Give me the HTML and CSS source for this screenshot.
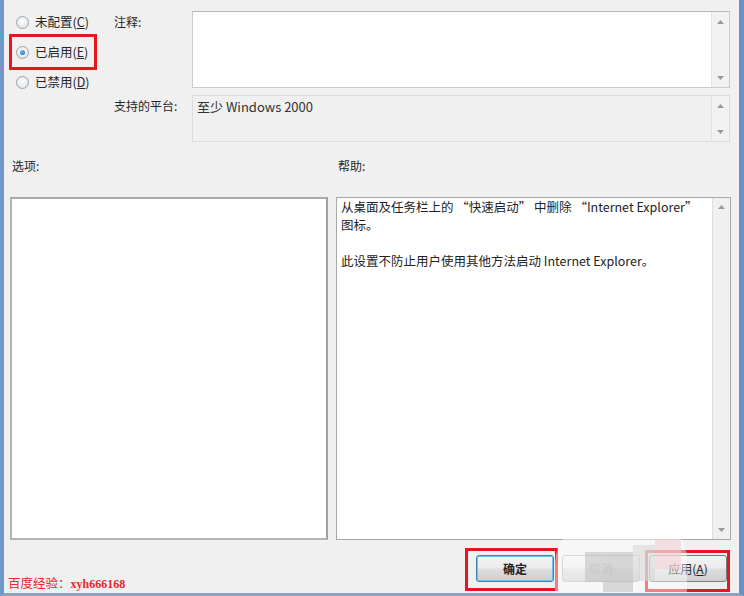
FILE: index.html
```html
<!DOCTYPE html>
<html lang="zh-CN">

<head>
  <meta charset="UTF-8" />
  <meta name="viewport" content="width=device-width, initial-scale=1.0" />
  <title>删除“快速启动”中的 Internet Explorer 图标</title>
  <link rel="stylesheet" href="styles.css">
</head>

<body>
  <div class="window">
    <div class="top">
      <div class="states">
        <div class="state"><span class="radio"></span><span class="state-text">未配置(<u>C</u>)</span></div>
        <div class="state marked"><span class="radio checked"></span><span class="state-text">已启用(<u>E</u>)</span></div>
        <div class="state"><span class="radio"></span><span class="state-text">已禁用(<u>D</u>)</span></div>
      </div>

      <div class="fields">
        <div class="field-label">注释:</div>
        <div class="box comment">
          <div class="box-body"></div>
          <div class="scroll">
            <svg width="9" height="6" viewBox="0 0 9 6"><polygon points="4.5,1 8,5 1,5" fill="#9a9a9a" /></svg>
            <svg width="9" height="6" viewBox="0 0 9 6"><polygon points="1,1 8,1 4.5,5" fill="#9a9a9a" /></svg>
          </div>
        </div>

        <div class="field-label">支持的平台:</div>
        <div class="box platform">
          <div class="box-body">至少 Windows 2000</div>
          <div class="scroll">
            <svg width="9" height="6" viewBox="0 0 9 6"><polygon points="4.5,1 8,5 1,5" fill="#9a9a9a" /></svg>
            <svg width="9" height="6" viewBox="0 0 9 6"><polygon points="1,1 8,1 4.5,5" fill="#9a9a9a" /></svg>
          </div>
        </div>
      </div>
    </div>

    <div class="panes">
      <div class="pane-label">选项:</div>
      <div class="pane-label help-label">帮助:</div>
      <div class="pane options"></div>
      <div class="pane help">
        <div class="help-text">
          <p>从桌面及任务栏上的 “快速启动” 中删除 “Internet Explorer”<br>图标。</p>
          <p>此设置不防止用户使用其他方法启动 Internet Explorer。</p>
        </div>
        <div class="scroll">
          <svg width="9" height="6" viewBox="0 0 9 6"><polygon points="4.5,1 8,5 1,5" fill="#9a9a9a" /></svg>
          <svg width="9" height="6" viewBox="0 0 9 6"><polygon points="1,1 8,1 4.5,5" fill="#9a9a9a" /></svg>
        </div>
      </div>
    </div>

    <div class="footer">
      <div class="credit">百度经验：<b>xyh666168</b></div>
      <div class="buttons">
        <div class="mark mark-ok"><button class="btn default">确定</button></div>
        <button class="btn">取消</button>
        <div class="mark mark-apply"><button class="btn">应用(<u>A</u>)</button></div>
      </div>
    </div>

    <!-- 水印 -->
    <div class="stamp">
      <span class="blob"></span>
      <span class="tile t1"></span>
      <span class="tile t2"></span>
      <span class="tile t3"></span>
      <span class="tile t4"></span>
    </div>
  </div>
</body>

</html>
```

FILE: styles.css
```css
body {
  margin: 0;
  background-color: #f0f0f0;
  font-family: "Noto Sans CJK SC", "Microsoft YaHei", sans-serif;
  font-size: 12px;
  color: #262626;
}

.window {
  position: relative;
  height: 596px;
  box-sizing: border-box;
  border-left: 4px solid #7097cc;
  border-right: 5px solid #6b90c6;
  border-bottom: 3px solid #8fa3bf;
  display: flex;
  flex-direction: column;
  overflow: hidden;
}

u {
  text-decoration: underline;
  text-underline-offset: 1px;
}

/* 上半部分：状态 + 注释 */
.top {
  display: flex;
  padding-top: 7px;
}

.states {
  width: 106px;
  flex: none;
}

.state {
  display: flex;
  align-items: center;
  gap: 6px;
  box-sizing: border-box;
  width: 82px;
  height: 30px;
  margin-left: 8px;
  padding-left: 4px;
  line-height: 16px;
}

.state-text {
  white-space: nowrap;
  font-size: 12.5px;
}

.state.marked {
  outline: 3px solid #e5161d;
  outline-offset: 0;
}

.radio {
  flex: none;
  width: 11px;
  height: 11px;
  border-radius: 50%;
  border: 1px solid #9ea4aa;
  background: radial-gradient(circle at 50% 40%, #ffffff 0%, #e4e6e8 70%, #d2d5d8 100%);
  display: flex;
  align-items: center;
  justify-content: center;
}

.radio.checked::after {
  content: "";
  width: 5px;
  height: 5px;
  border-radius: 50%;
  background: radial-gradient(circle at 40% 35%, #7fc0ee 0%, #1f6fb8 80%);
}

.fields {
  flex: 1;
  display: grid;
  grid-template-columns: 82px 1fr;
  row-gap: 7px;
  margin-top: 4px;
  margin-right: 9px;
}

.field-label {
  padding-left: 4px;
  padding-top: 3px;
  line-height: 16px;
}

.box {
  display: flex;
  border: 1px solid #c9cbce;
  border-top-color: #b4b6ba;
}

.box-body {
  flex: 1;
  padding: 2px 4px;
  line-height: 18px;
  font-size: 13px;
  color: #333;
}

.comment {
  height: 75px;
  background-color: #fff;
}

.platform {
  height: 45px;
  background-color: #f0f0f0;
  border-color: #dcdcdc;
}

.scroll {
  width: 17px;
  flex: none;
  display: flex;
  flex-direction: column;
  align-items: center;
  justify-content: space-between;
  padding: 7px 0 6px;
  background-color: #f2f2f2;
  border-left: 1px solid #e4e4e4;
}

/* 选项 / 帮助 */
.panes {
  display: grid;
  grid-template-columns: 318px 395px;
  grid-template-rows: 16px 343px;
  column-gap: 8px;
  row-gap: 23px;
  margin-top: 16px;
  margin-left: 6px;
}

.pane-label {
  line-height: 16px;
  padding-left: 2px;
}

.help-label {
  padding-left: 2px;
}

.pane {
  box-sizing: border-box;
  border: 2px solid #b3b3b3;
  border-top-color: #a9a9a9;
  background-color: #fff;
}

.options {
  border-right-color: #a0a0a0;
}

.help {
  display: flex;
  border-width: 1px;
  border-color: #a7a7a7;
}

.help-text {
  flex: 1;
  padding: 0 4px 0 4px;
  line-height: 18px;
  font-size: 12.5px;
  color: #222;
  white-space: nowrap;
}

.help-text p {
  margin: 0 0 18px;
}

.help .scroll {
  background-color: #f0f0f0;
  border-left: 1px solid #dedede;
  padding: 6px 0 6px;
}

/* 底部按钮 */
.footer {
  display: flex;
  align-items: flex-start;
  padding: 11px 12px 0 4px;
  flex: 1;
}

.credit {
  margin-top: 25px;
  color: #e8262b;
  font-size: 12.5px;
  line-height: 14px;
}

.credit b {
  font-family: "Liberation Serif", serif;
  font-weight: bold;
  font-size: 12px;
}

.buttons {
  margin-left: auto;
  display: flex;
  align-items: flex-start;
}

.mark {
  outline: 3px solid #e5161d;
}

.mark-ok {
  padding: 4px 1px 6px 8px;
  margin-right: 7px;
}

.mark-apply {
  padding: 2px 0 7px 1px;
  margin-left: 8px;
  margin-top: 2px;
}

.btn {
  width: 78px;
  height: 27px;
  margin: 0;
  font-family: inherit;
  font-size: 12px;
  color: #222;
  border: 1px solid #7a7a7a;
  border-radius: 3px;
  background: linear-gradient(#f3f3f3 0%, #ebebeb 48%, #dddddd 52%, #cfcfcf 100%);
}

.buttons > .btn {
  margin-top: 4px;
  color: #b8b8b8;
  border-color: #b5b5b5;
}

.btn.default {
  border-color: #3c7fb1;
  box-shadow: inset 0 0 0 1px #6fc3ee;
  font-weight: bold;
}

/* 水印图案 */
.stamp {
  position: absolute;
  left: 551px;
  top: 515px;
  width: 140px;
  height: 81px;
  pointer-events: none;
}

.blob {
  position: absolute;
  left: 0;
  top: 8px;
  width: 132px;
  height: 78px;
  border-radius: 40px 36px 0 0;
  background-color: rgba(255, 255, 255, 0.45);
}

.tile {
  position: absolute;
}

.t1 {
  left: 30px;
  top: 37px;
  width: 18px;
  height: 30px;
  background-color: rgba(190, 190, 190, 0.55);
}

.t2 {
  left: 48px;
  top: 37px;
  width: 30px;
  height: 40px;
  background-color: rgba(175, 175, 175, 0.45);
}

.t3 {
  left: 78px;
  top: 30px;
  width: 22px;
  height: 36px;
  background-color: rgba(215, 215, 215, 0.6);
}

.t4 {
  left: 100px;
  top: 24px;
  width: 26px;
  height: 30px;
  background-color: rgba(240, 200, 205, 0.55);
}
```
